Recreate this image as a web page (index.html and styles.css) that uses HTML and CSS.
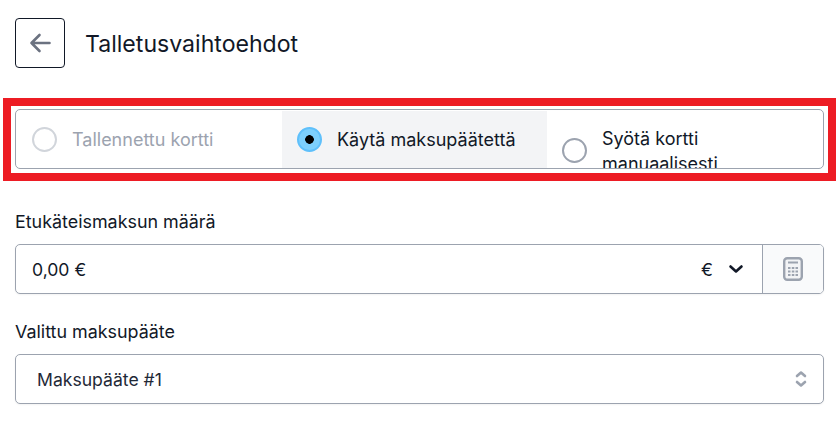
FILE: index.html
```html
<!DOCTYPE html>
<html lang="fi">
<head>
<meta charset="utf-8">
<title>Talletusvaihtoehdot</title>
<link rel="stylesheet" href="styles.css">
</head>
<body>
<header class="header">
  <button class="back" type="button" aria-label="Takaisin">
    <svg width="24" height="24" viewBox="0 0 24 24" fill="none" stroke="#6b7280" stroke-width="2.6" stroke-linecap="round" stroke-linejoin="round"><path d="M21.500 12H3.500M11.500 4l-8 8 8 8"/></svg>
  </button>
  <h1 class="title">Talletusvaihtoehdot</h1>
</header>
<section class="highlight">
  <div class="group">
    <label class="option option-first disabled"><span class="radio"></span><span class="option-text">Tallennettu kortti</span></label>
    <label class="option option-second selected"><span class="radio"></span><span class="option-text">Käytä maksupäätettä</span></label>
    <label class="option option-third"><span class="radio"></span><span class="option-text">Syötä kortti manuaalisesti</span></label>
  </div>
</section>
<section class="field field-amount">
  <div class="label">Etukäteismaksun määrä</div>
  <div class="control">
    <div class="value value-amount">0,00 €</div>
    <div class="currency"><span>€</span>
      <svg width="16" height="16" viewBox="0 0 16 16" fill="none" stroke="#111827" stroke-width="2.6" stroke-linecap="round" stroke-linejoin="round"><path d="M2.500 5.500l5.500 5 5.500-5"/></svg>
    </div>
    <div class="calc">
      <svg width="22" height="26" viewBox="0 0 22 26"><rect x="2.200" y="2.200" width="17.600" height="21.600" rx="3" fill="#f3f4f6" stroke="#9ca3af" stroke-width="2.400"/><rect x="6" y="5.500" width="10" height="2" fill="#9ca3af"/><g fill="#9ca3af"><rect x="6" y="11" width="2.500" height="2"/><rect x="9.800" y="11" width="2.500" height="2"/><rect x="13.500" y="11" width="2.500" height="2"/><rect x="6" y="14.500" width="2.500" height="2"/><rect x="9.800" y="14.500" width="2.500" height="2"/><rect x="13.500" y="14.500" width="2.500" height="2"/><rect x="6" y="18" width="2.500" height="2"/><rect x="9.800" y="18" width="2.500" height="2"/><rect x="13.500" y="18" width="2.500" height="2"/></g></svg>
    </div>
  </div>
</section>
<section class="field field-terminal">
  <div class="label">Valittu maksupääte</div>
  <div class="control">
    <div class="value value-terminal">Maksupääte #1</div>
    <svg class="updown" width="14" height="22" viewBox="0 0 14 22" fill="none" stroke="#9ca3af" stroke-width="2.600" stroke-linecap="round" stroke-linejoin="round"><path d="M3 8l4-3.500 4 3.500M3 14l4 3.500 4-3.500"/></svg>
  </div>
</section>
</body>
</html>
```
FILE: styles.css
```css
* { box-sizing: border-box; }
html, body { margin: 0; padding: 0; }
body {
  width: 837px;
  height: 438px;
  overflow: hidden;
  background: #fff;
  font-family: Inter, "Liberation Sans", sans-serif;
  font-size: 17.9px;
  color: #111827;
}
.header {
  display: flex;
  align-items: center;
  gap: 20px;
  padding: 18px 15px 0;
}
.back {
  width: 50px;
  height: 50px;
  display: flex;
  align-items: center;
  justify-content: center;
  background: #fff;
  border: 1px solid #111827;
  border-radius: 4px;
  padding: 0;
}
.title {
  margin: 2px 0 0;
  font-size: 23.1px;
  font-weight: 400;
  line-height: 28px;
}
.highlight {
  margin: 30px 1px 0 3px;
  height: 83px;
  border: 8px solid #ed1c24;
  padding: 3px 4px;
}
.group {
  display: grid;
  grid-template-columns: 266px 265px 1fr;
  height: 60px;
  padding-top: 1px;
  align-items: start;
  border: 1px solid #9ca3af;
  border-radius: 5px;
  overflow: hidden;
  background: #fff;
}
.option {
  display: flex;
  align-items: center;
  gap: 15px;
  height: 57px;
  padding: 0 16px 1px;
}
.option-second { padding-left: 15px; background: #f3f4f6; }
.option-third { height: 78px; padding: 0 60px 0 15px; }
.option-third .option-text { margin-top: 1px; }
.radio {
  flex: none;
  width: 25px;
  height: 25px;
  border: 2px solid #9ca3af;
  border-radius: 50%;
  background: #fff;
}
.option-text { line-height: 25px; font-size: 18px; }
.disabled { color: #9ca3af; }
.disabled .radio { border-color: #d1d5db; }
.selected .radio {
  border-color: #5fc0fb;
  background: radial-gradient(circle, #000 0, #000 4px, #7dd0fd 4.6px);
}
.field { padding: 0 13px 0 15px; }
.field-amount { margin-top: 30px; }
.field-terminal { margin-top: 27px; }
.label {
  line-height: 22px;
  margin-bottom: 11px;
  color: #111827;
}
.control {
  display: flex;
  align-items: center;
  height: 50px;
  border: 1px solid #9ca3af;
  border-radius: 5px;
  background: #fff;
  box-shadow: 0 1px 2px rgba(0, 0, 0, .05);
  overflow: hidden;
}
.value { flex: 1; font-size: 17.6px; }
.value-amount { padding-left: 16px; }
.value-terminal { padding-left: 21px; color: #1f2937; }
.currency {
  display: flex;
  align-items: center;
  gap: 15px;
  padding-right: 18px;
}
.calc {
  width: 61px;
  height: 100%;
  display: flex;
  align-items: center;
  justify-content: center;
  border-left: 1px solid #9ca3af;
  background: #f9fafb;
}
.updown { margin-right: 15px; }
```
